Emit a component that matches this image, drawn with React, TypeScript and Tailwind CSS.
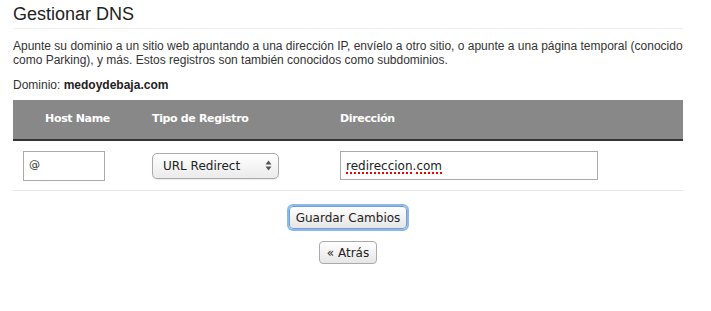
const body = { fontFamily: '"Liberation Sans", Arial, sans-serif' }
const ui = { fontFamily: '"DejaVu Sans", "Liberation Sans", sans-serif' }

const SelectArrows = () => (
  <svg width="7" height="11" viewBox="0 0 7 11" className="ml-auto">
    <path d="M3.5 0.5 L6.5 4.5 L0.5 4.5 Z" fill="#555" />
    <path d="M0.5 6.5 L6.5 6.5 L3.5 10.5 Z" fill="#555" />
  </svg>
)

const App = () => {
  return (
    <div className="w-[711px] h-[311px] bg-white text-[#222]" style={body}>
      <div className="w-[670px] ml-[13px]">
        <h2 className="pt-[4px] pb-[3px] text-[18px] leading-[21px] text-[#222] border-b border-[#eee]">Gestionar DNS</h2>
        <p className="mt-[10px] text-[12px] leading-[14px] text-[#333]">
          Apunte su dominio a un sitio web apuntando a una dirección IP, envíelo a otro sitio, o apunte a una página temporal (conocido como Parking), y más. Estos registros son también conocidos como subdominios.
        </p>
        <div className="mt-[11px] text-[12px] leading-[14px] text-[#333]">
          Dominio: <b className="text-[#222]">medoydebaja.com</b>
        </div>

        <div className="mt-[8px]">
          <div className="flex h-[41px] items-center bg-[#888] border-b-2 border-[#333] text-white text-[11px] font-bold tracking-[-0.35px]" style={ui}>
            <div className="w-[129px] text-center">Host Name</div>
            <div className="w-[188px] pl-[10px]">Tipo de Registro</div>
            <div className="pl-[10px]">Dirección</div>
          </div>
          <div className="flex h-[50px] items-center border-b border-[#e8e8e8]" style={ui}>
            <div className="w-[129px] pl-[10px]">
              <div className="w-[82px] h-[30px] border border-[#aaa] flex items-center pl-[5px] text-[11px] text-[#333]">@</div>
            </div>
            <div className="w-[188px] pl-[10px]">
              <div className="w-[127px] h-[26px] rounded-[5px] border border-[#aaa] bg-gradient-to-b from-white to-[#ebebeb] shadow-[0_1px_1px_rgba(0,0,0,0.08)] flex items-center pl-[10px] pr-[6px] text-[12px] text-[#222]">
                URL Redirect
                <SelectArrows />
              </div>
            </div>
            <div className="pl-[10px]">
              <div className="w-[258px] h-[29px] border border-[#aaa] flex items-center pl-[5px] text-[12px] text-[#222]">
                <span className="underline decoration-dotted decoration-[#e00] decoration-2 underline-offset-[3px]">redireccion</span>.
                <span className="underline decoration-dotted decoration-[#e00] decoration-2 underline-offset-[3px]">com</span>
              </div>
            </div>
          </div>
        </div>

        <div className="flex flex-col items-center mt-[15px]" style={ui}>
          <button className="h-[23px] px-[6px] rounded-[4px] border border-[#6f9fd8] bg-gradient-to-b from-white to-[#e6e6e6] text-[12px] text-[#222] shadow-[0_0_0_2px_#8db8e8]">
            Guardar Cambios
          </button>
          <button className="mt-[12px] h-[23px] px-[7px] rounded-[4px] border border-[#aaa] bg-gradient-to-b from-white to-[#e6e6e6] text-[12px] text-[#222]">
            « Atrás
          </button>
        </div>
      </div>
    </div>
  )
}

export default App
